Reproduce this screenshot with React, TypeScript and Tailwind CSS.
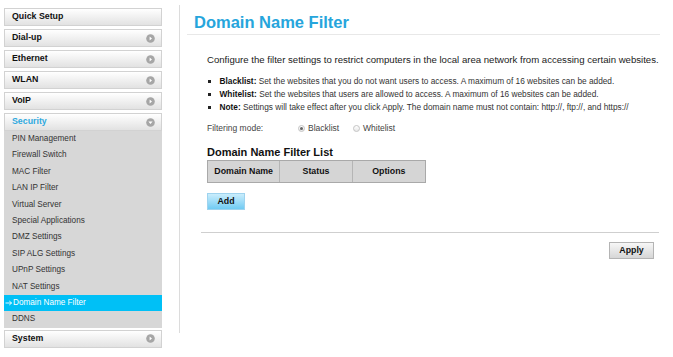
import React from "react";

const headers = ["Dial-up", "Ethernet", "WLAN", "VoIP"];

const subItems = [
  "PIN Management",
  "Firewall Switch",
  "MAC Filter",
  "LAN IP Filter",
  "Virtual Server",
  "Special Applications",
  "DMZ Settings",
  "SIP ALG Settings",
  "UPnP Settings",
  "NAT Settings",
  "Domain Name Filter",
  "DDNS",
];

const CircleIcon = ({ down = false }: { down?: boolean }) => (
  <svg width="9" height="9" viewBox="0 0 9 9" className="mr-[6px]">
    <circle cx="4.5" cy="4.5" r="4.3" fill="#a6a6a6" />
    {down ? (
      <path d="M2.4 3.5 L6.6 3.5 L4.5 6 Z" fill="#fff" />
    ) : (
      <path d="M3.6 2.4 L6 4.5 L3.6 6.6 Z" fill="#fff" />
    )}
  </svg>
);

const MenuHeader = ({
  label,
  icon = true,
  active = false,
}: {
  label: string;
  icon?: boolean;
  active?: boolean;
}) => (
  <div className="flex h-[18px] items-center justify-between border border-[#d2d2d2] bg-gradient-to-b from-[#ffffff] to-[#e2e2e2] pl-[7px]">
    <span
      className={
        "text-[8.8px] font-bold " + (active ? "text-[#2fa9de]" : "text-[#111]")
      }
    >
      {label}
    </span>
    {icon && <CircleIcon down={active} />}
  </div>
);

const Sidebar = () => (
  <div className="ml-[4px] mt-[8px] flex w-[158px] flex-col">
    <MenuHeader label="Quick Setup" icon={false} />
    {headers.map((h) => (
      <div key={h} className="mt-[3px]">
        <MenuHeader label={h} />
      </div>
    ))}
    <div className="mt-[3px]">
      <MenuHeader label="Security" active />
    </div>
    <div className="flex flex-col bg-[#d7d7d7]">
      {subItems.map((s) =>
        s === "Domain Name Filter" ? (
          <div
            key={s}
            className="flex h-[16.4px] items-center bg-[#00c0f6] text-[8.2px] text-white"
          >
            <svg width="8" height="6" viewBox="0 0 8 6" className="ml-[1px] mr-[0px]">
              <path
                d="M0.5 3 H6.5 M4.3 1 L6.6 3 L4.3 5"
                stroke="#fff"
                strokeWidth="0.9"
                fill="none"
              />
            </svg>
            <span>{s}</span>
          </div>
        ) : (
          <div
            key={s}
            className="flex h-[16.4px] items-center pl-[8px] text-[8.2px] text-[#333]"
          >
            {s}
          </div>
        )
      )}
    </div>
    <div className="mt-[2px]">
      <MenuHeader label="System" />
    </div>
  </div>
);

const Radio = ({ checked }: { checked?: boolean }) => (
  <span className="flex h-[7px] w-[7px] items-center justify-center rounded-full border border-[#c4c4c4] bg-gradient-to-b from-[#ffffff] to-[#e8e8e8]">
    {checked && <span className="h-[3px] w-[3px] rounded-full bg-[#666]" />}
  </span>
);

const Bullet = ({ label, text }: { label: string; text: string }) => (
  <div className="flex h-[13px] items-center text-[8.3px] text-[#333]">
    <span className="ml-[1px] mr-[9px] h-[2.5px] w-[2.5px] bg-[#222]" />
    <span>
      <b className="text-[#111]">{label}</b> {text}
    </span>
  </div>
);

export default function App() {
  return (
    <div className="flex h-[357px] w-[673px] bg-white font-['Liberation_Sans',Arial,sans-serif]">
      <div className="flex w-[180px]">
        <Sidebar />
        <div className="ml-[17px] mt-[5px] h-[328px] w-[1px] bg-[#dcdcdc]" />
      </div>

      <div className="flex flex-1 flex-col">
        <div className="ml-[7px] mr-[13px] h-[35px] border-b border-[#e8e8e8] pl-[7px] pt-[14px]">
          <h1 className="text-[16.5px] font-bold leading-none text-[#26a5dc]">
            Domain Name Filter
          </h1>
        </div>

        <div className="ml-[27px] mr-[13px] flex flex-col">
          <div className="mt-[18px] flex h-[14px] items-center text-[9.6px] text-[#222]">
            Configure the filter settings to restrict computers in the local
            area network from accessing certain websites.
          </div>

          <div className="mt-[8px] flex flex-col">
            <Bullet
              label="Blacklist:"
              text="Set the websites that you do not want users to access. A maximum of 16 websites can be added."
            />
            <Bullet
              label="Whitelist:"
              text="Set the websites that users are allowed to access. A maximum of 16 websites can be added."
            />
            <Bullet
              label="Note:"
              text="Settings will take effect after you click Apply. The domain name must not contain: http://, ftp://, and https://"
            />
          </div>

          <div className="mt-[7px] flex h-[14px] items-center text-[8.5px] text-[#444]">
            <span className="w-[91px]">Filtering mode:</span>
            <Radio checked />
            <span className="ml-[3px] w-[45px]">Blacklist</span>
            <Radio />
            <span className="ml-[3px]">Whitelist</span>
          </div>

          <div className="mt-[10px] flex h-[14px] items-center text-[11px] font-bold text-[#111]">
            Domain Name Filter List
          </div>

          <div className="mt-[1px] grid h-[23px] w-[219px] grid-cols-3 border border-[#a9a9a9] bg-[#d5d5d5] text-[8.8px] font-bold text-[#111]">
            <div className="flex items-center justify-center border-r border-[#b5b5b5]">
              Domain Name
            </div>
            <div className="flex items-center justify-center border-r border-[#b5b5b5]">
              Status
            </div>
            <div className="flex items-center justify-center">Options</div>
          </div>

          <button className="mt-[10px] flex h-[17px] w-[38px] items-center justify-center border border-[#9fd3ee] bg-gradient-to-b from-[#c9edfc] to-[#6fcbf3] text-[8.8px] font-bold text-[#111]">
            Add
          </button>
        </div>

        <div className="ml-[21px] mr-[14px] mt-[22px] border-t border-[#cfcfcf]" />

        <div className="mr-[19px] mt-[9px] flex justify-end">
          <button className="flex h-[17px] w-[45px] items-center justify-center border border-[#b4b4b4] bg-gradient-to-b from-[#f7f7f7] to-[#d6d6d6] text-[8.8px] font-bold text-[#111]">
            Apply
          </button>
        </div>
      </div>
    </div>
  );
}
